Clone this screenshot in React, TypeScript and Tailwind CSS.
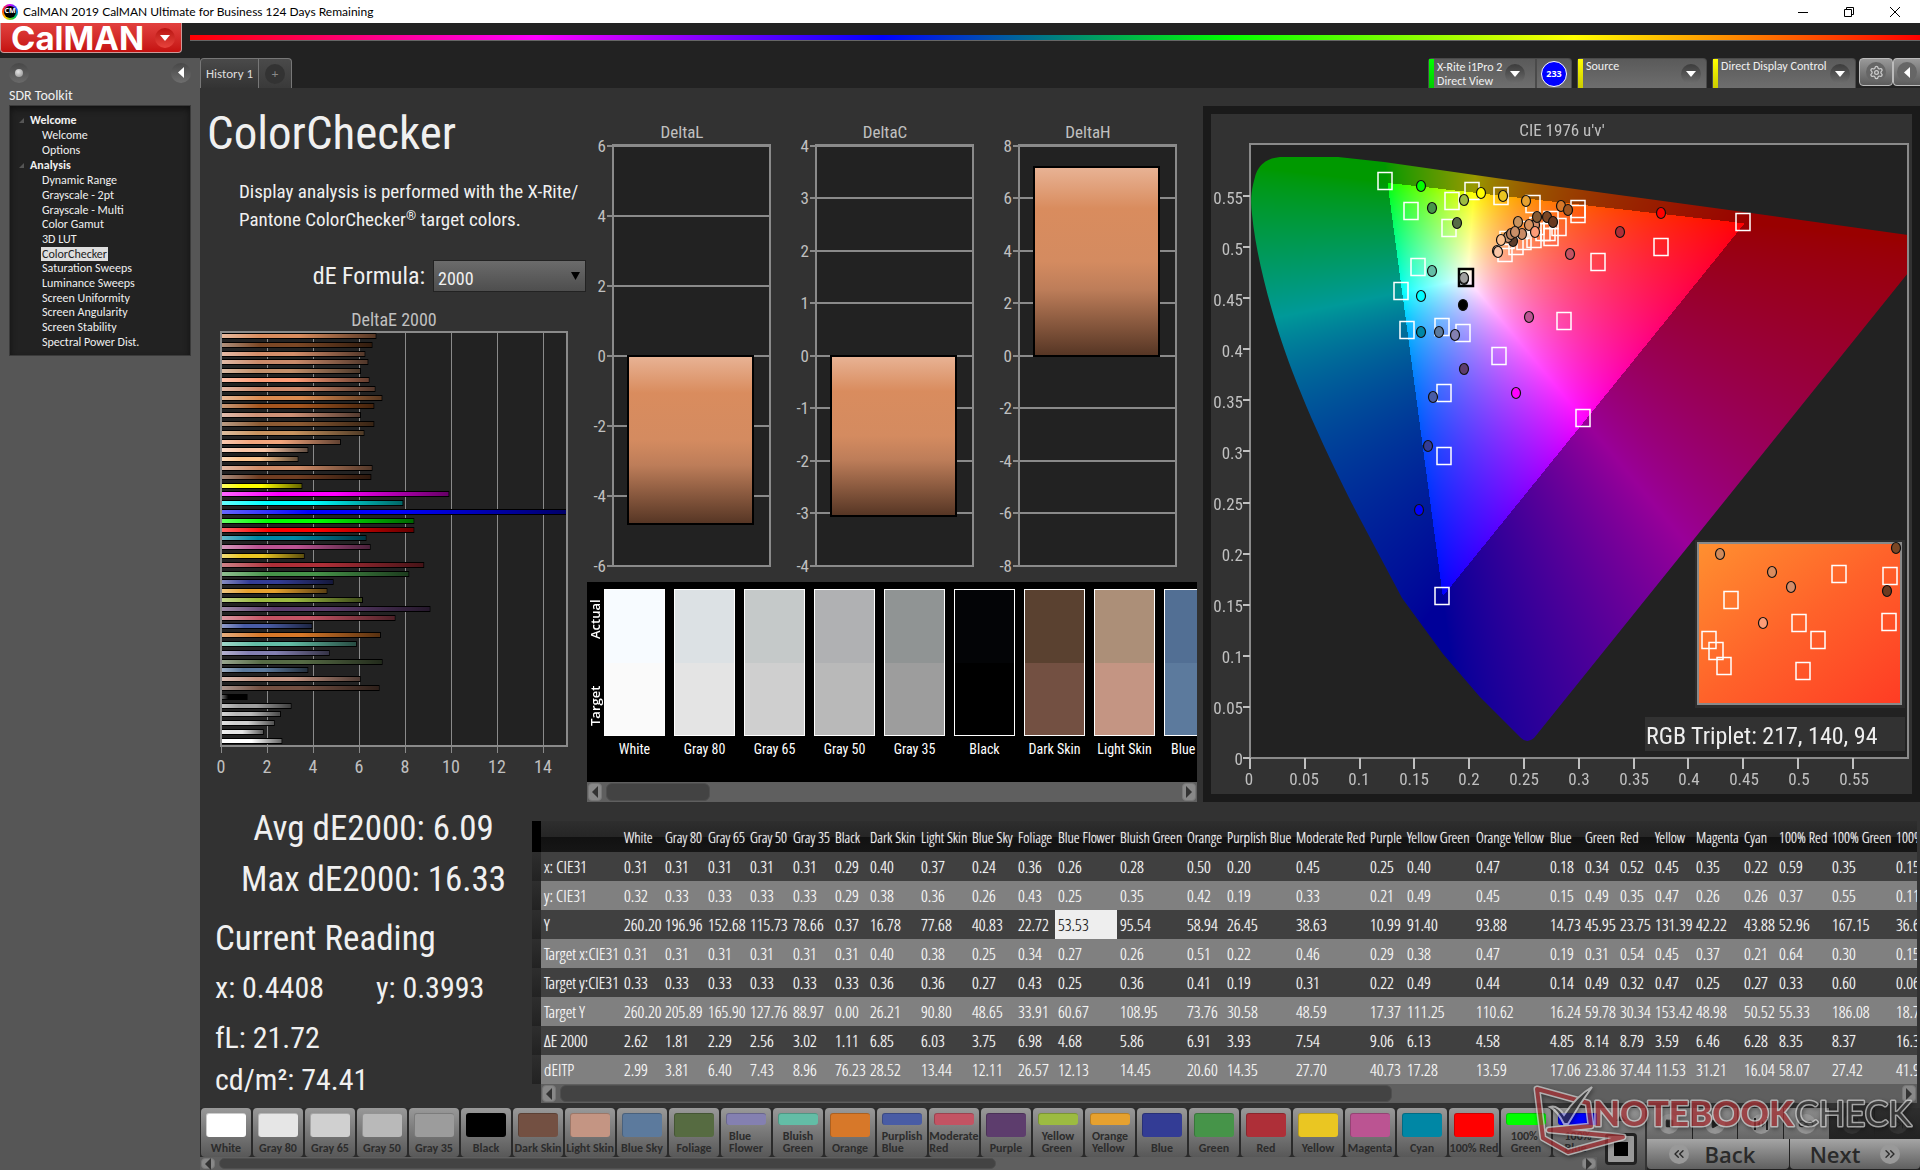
import React, { useEffect, useRef } from "react";
import clsx from "clsx";
import { Settings, ChevronsLeft, ChevronsRight, Square, Play, Infinity as Loop, RefreshCw, SkipForward } from "lucide-react";

const sweeps = [
  "Dynamic Range",
  "Grayscale - 2pt",
  "Grayscale - Multi",
  "Color Gamut",
  "3D LUT",
  "ColorChecker",
  "Saturation Sweeps",
  "Luminance Sweeps",
  "Screen Uniformity",
  "Screen Angularity",
  "Screen Stability",
  "Spectral Power Dist.",
];

// [dE2000, color], top to bottom
const deltaE: [number, string][] = [
  [6.71, "#d98c5e"], [6.54, "#7b4725"], [6.23, "#d38d6a"], [6.36, "#ca8a6a"], [6.04, "#c28f6b"],
  [6.41, "#fe9c77"], [6.67, "#cf8a6c"], [6.97, "#d9894f"], [6.62, "#a5561f"], [6.04, "#cf9277"],
  [6.62, "#8b5a33"], [6.19, "#c8935f"], [5.17, "#f3a57c"], [3.75, "#f9c5a6"], [3.32, "#fdc590"],
  [6.54, "#cf8c68"], [6.49, "#6f3d22"], [3.49, "#ffff00"], [9.88, "#ff00ff"], [7.88, "#00ffff"],
  [15.1, "#0000ff"], [8.36, "#00ff00"], [8.36, "#ff0000"], [6.28, "#0087a5"], [6.46, "#bb5492"],
  [3.59, "#eac622"], [8.79, "#ae2f38"], [8.14, "#469449"], [4.85, "#333c95"], [4.58, "#e6a12f"],
  [6.13, "#9cbb41"], [9.06, "#5d3d6d"], [7.54, "#c35363"], [3.93, "#495ca5"], [6.91, "#d77829"],
  [5.86, "#63bda6"], [4.68, "#8480b1"], [6.98, "#566b45"], [3.75, "#5c7a9d"], [6.03, "#c49583"],
  [6.85, "#735042"], [1.11, "#000000"], [3.02, "#9f9f9f"], [2.56, "#b9b9b9"], [2.29, "#d0d0d0"],
  [1.81, "#e6e6e6"], [2.62, "#ffffff"],
];

const comparison = [
  { name: "White", actual: "#f7fbff", target: "#fafafa" },
  { name: "Gray 80", actual: "#dce1e4", target: "#e4e4e4" },
  { name: "Gray 65", actual: "#c5c9c9", target: "#cfcfcf" },
  { name: "Gray 50", actual: "#b0b1b3", target: "#b9b9b9" },
  { name: "Gray 35", actual: "#909494", target: "#9d9d9d" },
  { name: "Black", actual: "#030406", target: "#000000" },
  { name: "Dark Skin", actual: "#5a4130", target: "#735042" },
  { name: "Light Skin", actual: "#ac8f78", target: "#c49583" },
  { name: "Blue Sky", actual: "#526f94", target: "#5c7a9d" },
];

// a line break in the name gives the low swatch
const patches: [string, string][] = [
  ["White", "#ffffff"], ["Gray 80", "#e6e6e6"], ["Gray 65", "#d0d0d0"], ["Gray 50", "#b9b9b9"],
  ["Gray 35", "#9c9c9c"], ["Black", "#000000"], ["Dark Skin", "#735042"], ["Light Skin", "#c49583"],
  ["Blue Sky", "#5c7a9d"], ["Foliage", "#566b41"], ["Blue\nFlower", "#8480b1"], ["Bluish\nGreen", "#63bda6"],
  ["Orange", "#d77829"], ["Purplish\nBlue", "#495ca5"], ["Moderate\nRed", "#c35363"], ["Purple", "#5d3d6d"],
  ["Yellow\nGreen", "#9cbb41"], ["Orange\nYellow", "#e6a12f"], ["Blue", "#333c95"], ["Green", "#469449"],
  ["Red", "#ae2f38"], ["Yellow", "#eac622"], ["Magenta", "#bb5492"], ["Cyan", "#0087a5"],
  ["100% Red", "#ff0000"], ["100%\nGreen", "#00ff00"], ["100%\nBlue", "#0000ff"],
];

const columns: [string, number][] = [
  ["White", 41], ["Gray 80", 43], ["Gray 65", 42], ["Gray 50", 43], ["Gray 35", 42], ["Black", 35],
  ["Dark Skin", 51], ["Light Skin", 51], ["Blue Sky", 46], ["Foliage", 40], ["Blue Flower", 62],
  ["Bluish Green", 67], ["Orange", 40], ["Purplish Blue", 69], ["Moderate Red", 74], ["Purple", 37],
  ["Yellow Green", 69], ["Orange Yellow", 74], ["Blue", 35], ["Green", 35], ["Red", 35], ["Yellow", 41],
  ["Magenta", 48], ["Cyan", 35], ["100% Red", 53], ["100% Green", 64], ["100% Blue", 64],
];

const rows: [string, string][] = [
  ["x: CIE31", "0.31 0.31 0.31 0.31 0.31 0.29 0.40 0.37 0.24 0.36 0.26 0.28 0.50 0.20 0.45 0.25 0.40 0.47 0.18 0.34 0.52 0.45 0.35 0.22 0.59 0.35 0.15"],
  ["y: CIE31", "0.32 0.33 0.33 0.33 0.33 0.29 0.38 0.36 0.26 0.43 0.25 0.35 0.42 0.19 0.33 0.21 0.49 0.45 0.15 0.49 0.35 0.47 0.26 0.26 0.37 0.55 0.11"],
  ["Y", "260.20 196.96 152.68 115.73 78.66 0.37 16.78 77.68 40.83 22.72 53.53 95.54 58.94 26.45 38.63 10.99 91.40 93.88 14.73 45.95 23.75 131.39 42.22 43.88 52.96 167.15 36.67"],
  ["Target x:CIE31", "0.31 0.31 0.31 0.31 0.31 0.31 0.40 0.38 0.25 0.34 0.27 0.26 0.51 0.22 0.46 0.29 0.38 0.47 0.19 0.31 0.54 0.45 0.37 0.21 0.64 0.30 0.15"],
  ["Target y:CIE31", "0.33 0.33 0.33 0.33 0.33 0.33 0.36 0.36 0.27 0.43 0.25 0.36 0.41 0.19 0.31 0.22 0.49 0.44 0.14 0.49 0.32 0.47 0.25 0.27 0.33 0.60 0.06"],
  ["Target Y", "260.20 205.89 165.90 127.76 88.97 0.00 26.21 90.80 48.65 33.91 60.67 108.95 73.76 30.58 48.59 17.37 111.25 110.62 16.24 59.78 30.34 153.42 48.98 50.52 55.33 186.08 18.79"],
  ["ΔE 2000", "2.62 1.81 2.29 2.56 3.02 1.11 6.85 6.03 3.75 6.98 4.68 5.86 6.91 3.93 7.54 9.06 6.13 4.58 4.85 8.14 8.79 3.59 6.46 6.28 8.35 8.37 16.33"],
  ["dEITP", "2.99 3.81 6.40 7.43 8.96 76.23 28.52 13.44 12.11 26.57 12.13 14.45 20.60 14.35 27.70 40.73 17.28 13.59 17.06 23.86 37.44 11.53 31.21 16.04 58.07 27.42 41.91"],
];

// marker centres, in px inside the CIE panel
const targets: [number, number][] = [
  [174, 67], [261, 77], [241, 87], [200, 97], [290, 82], [238, 114], [207, 153], [190, 177], [196, 216],
  [231, 213], [252, 219], [288, 242], [233, 279], [353, 207], [387, 148], [450, 133], [367, 95], [367, 100],
  [322, 90], [348, 113], [340, 106], [340, 123], [294, 139], [296, 126], [305, 132], [313, 127], [323, 125],
  [332, 118], [337, 118], [311, 116], [326, 112], [532, 108], [372, 304], [233, 342], [231, 482],
];

const readings: [number, number, string][] = [
  [210, 72, "#00ff00"], [221, 94, "#469449"], [253, 86, "#9cbb41"], [270, 79, "#ffff00"], [292, 82, "#eac622"],
  [315, 87, "#e6a12f"], [350, 92, "#d77829"], [357, 96, "#a05520"], [246, 109, "#566b45"], [221, 157, "#63bda6"],
  [210, 182, "#00ffff"], [210, 218, "#0087a5"], [228, 218, "#5c7a9d"], [244, 221, "#8480b1"], [253, 165, "#808080"],
  [253, 164, "#9f9f9f"], [252, 191, "#000000"], [318, 203, "#bb5492"], [359, 140, "#c35363"], [409, 118, "#ae2f38"],
  [253, 255, "#5d3d6d"], [222, 283, "#495ca5"], [305, 279, "#ff00ff"], [450, 99, "#ff0000"], [217, 332, "#333c95"],
  [208, 396, "#0000ff"], [302, 127, "#5b3c2a"], [297, 123, "#c28f6b"], [300, 120, "#b9805c"], [307, 108, "#c8935f"],
  [324, 111, "#d38d6a"], [318, 111, "#d9925f"], [324, 118, "#fe9c77"], [311, 120, "#ca8a64"], [304, 118, "#c98f68"],
  [326, 103, "#855a33"], [336, 103, "#7b4725"], [342, 108, "#6a3a20"], [290, 126, "#fdc08d"], [286, 137, "#d9a98d"],
  [287, 138, "#f9c5a6"],
];

const insetTargets: [number, number][] = [
  [628, 460], [679, 462], [520, 486], [498, 526], [505, 537], [513, 552], [588, 509], [607, 526], [678, 508], [592, 557],
];

const insetReadings: [number, number, string][] = [
  [509, 440, "#d08b5c"], [561, 458, "#d98c5e"], [580, 473, "#d38d6a"], [552, 509, "#fe9c77"], [685, 434, "#7b4725"], [676, 477, "#6b3a20"],
];

function DropArrow() {
  return (
    <span className="flex size-5 shrink-0 items-center justify-center rounded-full bg-linear-to-b from-[#3c3c3c] to-[#6e6e6e]">
      <svg width="10" height="6" viewBox="0 0 10 6"><path d="M0 0H10L5 6Z" fill="#fff" /></svg>
    </span>
  );
}

function Header() {
  return (
    <header>
      <div className="flex h-[23px] items-center bg-white pl-[2px] text-black">
        <span className="flex size-4 items-center justify-center rounded-full bg-[conic-gradient(#c0f,#06f,#0c4,#fc0,#f30,#c0f)]">
          <span className="flex size-3 items-center justify-center rounded-full bg-black font-['Open_Sans'] text-[7px] font-bold text-white">CM</span>
        </span>
        <h1 className="ml-[5px] flex-1 font-['Lato'] text-[12px]">CalMAN 2019 CalMAN Ultimate for Business 124 Days Remaining</h1>
        <div className="flex items-center pr-[2px]">
          <button aria-label="Minimize" className="flex w-[46px] justify-center"><svg width="10" height="10"><path d="M0 5.5H10" stroke="#000" /></svg></button>
          <button aria-label="Restore" className="flex w-[46px] justify-center"><svg width="10" height="10" fill="none" stroke="#000"><path d="M.5 2.5H7.5V9.5H.5ZM2.5 2.5V.5H9.5V7.5H7.5" /></svg></button>
          <button aria-label="Close" className="flex w-[46px] justify-center"><svg width="10" height="10"><path d="M0 0L10 10M10 0L0 10" stroke="#000" /></svg></button>
        </div>
      </div>
      <div className="flex h-[35px] bg-[#222]">
        <button className="flex h-[30px] w-[182px] items-center rounded-b border border-t-0 border-[#c99] bg-linear-to-b from-[#e2403e] to-[#c5100f] pl-[10px]">
          <span className="flex-1 text-left font-['Inter'] text-[33px] leading-7 font-bold text-white">CalMAN</span>
          <span className="mr-[6px] flex size-5 items-center justify-center rounded-full bg-linear-to-b from-[#b8120f] to-[#e8423c]">
            <svg width="10" height="6" viewBox="0 0 10 6"><path d="M0 0H10L5 6Z" fill="#fff" /></svg>
          </span>
        </button>
        <div className="mt-3 ml-2 h-[6px] flex-1 border-b border-[#666] bg-[linear-gradient(to_right,#f00,#f0f,#00f,#0f0,#ff0,#f00)]" />
      </div>
    </header>
  );
}

function TreeGroup({ name, items, className }: { name: string; items: string[]; className: string }) {
  return (
    <div>
      <div className="flex h-4 items-center text-[12px] font-bold">
        <svg width="5" height="5" className="mr-[6px]"><path d="M5 0V5H0Z" fill="#555" /></svg>
        {name}
      </div>
      <ul className={clsx("grid auto-rows-fr items-center pl-[22px] text-[12px] leading-[14px]", className)}>
        {items.map((item) => (
          <li key={item} className="flex">
            <a href="#" className={clsx("px-px", item === "ColorChecker" && "bg-[#dedede] text-[#222]")}>{item}</a>
          </li>
        ))}
      </ul>
    </div>
  );
}

function Sidebar() {
  return (
    <aside className="w-[200px] shrink-0 bg-[#565656] px-[9px] font-['Carlito'] text-[#f0f0f0]">
      <div className="flex h-[29px] items-center justify-between">
        <button aria-label="Pin" className="flex size-5 items-center justify-center rounded-full bg-linear-to-b from-[#484848] to-[#6a6a6a]">
          <span className="size-2 rounded-full bg-[radial-gradient(circle_at_40%_35%,#e4e4e4,#8a8a8a)]" />
        </button>
        <button aria-label="Collapse" className="flex size-5 items-center justify-center rounded-full bg-linear-to-b from-[#484848] to-[#6e6e6e]">
          <svg width="6" height="11"><path d="M6 0V11L0 5.5Z" fill="#fff" /></svg>
        </button>
      </div>
      <h2 className="h-[18px] text-[14px] leading-[18px]">SDR Toolkit</h2>
      <nav className="h-[251px] border border-[#3a3a3a] bg-[#222] pt-[6px] pl-[9px] shadow-[inset_0_3px_6px_#111]">
        <TreeGroup name="Welcome" items={["Welcome", "Options"]} className="h-[29px]" />
        <TreeGroup name="Analysis" items={sweeps} className="h-[176px]" />
      </nav>
    </aside>
  );
}

function Devices() {
  return (
    <div className="flex font-['Carlito'] text-[12px] leading-[14px] text-[#f0f0f0]">
      <div className="mr-[5px] flex h-[30px] w-[144px] rounded-t border border-b-0 border-[#4a4a4a] bg-linear-to-b from-[#5a5a5a] to-[#6e6e6e]">
        <span className="w-[5px] bg-linear-to-b from-[#0f0] to-[#0c0]" />
        <button className="flex flex-1 items-center pr-[10px] pl-[3px] text-left"><span className="flex-1">X-Rite i1Pro 2<br />Direct View</span><DropArrow /></button>
        <span className="flex w-9 items-center justify-center border-l-2 border-[#4a4a4a]">
          <span className="flex size-[26px] items-center justify-center rounded-full border border-white bg-[#00f] font-['Open_Sans'] text-[9px] font-bold text-white">233</span>
        </span>
      </div>
      <button className="mr-[5px] flex h-[30px] w-[130px] rounded-t border border-b-0 border-[#4a4a4a] bg-linear-to-b from-[#5a5a5a] to-[#6e6e6e] pr-[5px] text-left">
        <span className="mr-[3px] h-full w-[5px] bg-linear-to-b from-[#ff0] to-[#cc0]" />
        <span className="flex-1">Source</span>
        <span className="self-center"><DropArrow /></span>
      </button>
      <button className="mr-[3px] flex h-[30px] w-[144px] rounded-t border border-b-0 border-[#4a4a4a] bg-linear-to-b from-[#5a5a5a] to-[#6e6e6e] pr-[5px] text-left">
        <span className="mr-[3px] h-full w-[5px] bg-linear-to-b from-[#ff0] to-[#cc0]" />
        <span className="flex-1 whitespace-nowrap">Direct Display Control</span>
        <span className="self-center"><DropArrow /></span>
      </button>
      <button aria-label="Settings" className="flex h-7 w-[34px] items-center justify-center rounded border border-[#bbb] bg-linear-to-b from-[#999] to-[#5c5c5c]">
        <span className="flex size-5 items-center justify-center rounded-full bg-[#666]"><Settings size={15} color="#ccc" /></span>
      </button>
      <button aria-label="Show panel" className="flex h-7 w-[27px] items-center justify-center rounded-l border border-r-0 border-[#bbb] bg-linear-to-b from-[#999] to-[#5c5c5c]">
        <span className="flex size-5 items-center justify-center rounded-full bg-[#666]"><svg width="6" height="11"><path d="M6 0V11L0 5.5Z" fill="#fff" /></svg></span>
      </button>
    </div>
  );
}

function DeltaEChart() {
  return (
    <svg width="387" height="490" className="mt-2 block text-[18px]" fill="#c0c0c0">
      <defs>
        <linearGradient id="shineX">
          <stop offset="0" stopColor="#fff" stopOpacity=".4" />
          <stop offset=".25" stopColor="#fff" stopOpacity="0" />
          <stop offset=".5" stopColor="#000" stopOpacity="0" />
          <stop offset="1" stopColor="#000" stopOpacity=".6" />
        </linearGradient>
        <clipPath id="plotE"><rect x="21" y="32" width="346" height="414" /></clipPath>
      </defs>
      <text x="194" y="26" textAnchor="middle">DeltaE 2000</text>
      <rect x="21" y="32" width="346" height="414" fill="#222" />
      {[0, 2, 4, 6, 8, 10, 12, 14].map((v) => (
        <g key={v}>
          <path d={`M${21.5 + v * 23} 32V453`} stroke="#8a8a8a" />
          <text x={21 + v * 23} y="473" textAnchor="middle">{v}</text>
        </g>
      ))}
      <g clipPath="url(#plotE)">
        {deltaE.map(([v, color], i) => {
          const y = Math.round(33 + i * 8.8);
          return (
            <g key={i}>
              <rect x="21" y={y} width={v * 23 + 1} height="6" fill="#000" />
              <rect x="22" y={y + 1} width={v * 23 - 1} height="4" fill={color} />
              <rect x="22" y={y + 1} width={v * 23 - 1} height="4" fill="url(#shineX)" />
            </g>
          );
        })}
      </g>
      <rect x="21" y="32" width="346" height="414" fill="none" stroke="#8a8a8a" strokeWidth="2" />
    </svg>
  );
}

function DeltaChart({ title, max, step, value }: { title: string; max: number; step: number; value: number }) {
  const y = (v: number) => Math.round(267.5 - (v / max) * 210);
  const ticks: number[] = [];
  for (let v = max; v >= -max; v -= step) ticks.push(v);
  const top = Math.min(y(value), y(0));
  const height = Math.abs(y(value) - y(0));
  return (
    <svg width="203" height="494" className="block text-[17px]" fill="#c0c0c0">
      <defs>
        <linearGradient id={"bar" + title} x2="0" y2="1">
          <stop offset="0" stopColor="#e8b395" />
          <stop offset=".22" stopColor="#d98c5e" />
          <stop offset=".5" stopColor="#d48b60" />
          <stop offset=".65" stopColor="#bd7d59" />
          <stop offset="1" stopColor="#553524" />
        </linearGradient>
      </defs>
      <text x="95" y="50" textAnchor="middle">{title}</text>
      <rect x="26" y="57" width="157" height="421" fill="#222" stroke="#8a8a8a" strokeWidth="2" />
      {ticks.map((v) => (
        <g key={v}>
          <path d={`M20 ${y(v)}H183`} stroke="#8a8a8a" strokeWidth="2" />
          <text x="19" y={y(v) + 6} textAnchor="end">{v}</text>
        </g>
      ))}
      <rect x="41" y={top} width="125" height={height} fill={`url(#bar${title})`} stroke="#000" strokeWidth="2" />
    </svg>
  );
}

function ScrollBar({ thumb, className }: { thumb: string; className: string }) {
  return (
    <div className={clsx("flex bg-[#5f5f5f] p-px", className)}>
      <button aria-label="Scroll left" className="flex w-[14px] items-center justify-center rounded-sm border border-[#777] bg-[#888]"><svg width="6" height="12"><path d="M6 0V12L0 6Z" fill="#333" /></svg></button>
      <div className="mx-1 flex flex-1"><div className={clsx("rounded-md border border-[#4f4f4f] bg-[#434343]", thumb)} /></div>
      <button aria-label="Scroll right" className="flex w-[14px] items-center justify-center rounded-sm border border-[#777] bg-[#888]"><svg width="6" height="12"><path d="M0 0V12L6 6Z" fill="#333" /></svg></button>
    </div>
  );
}

function Comparison() {
  return (
    <section className="w-[610px]">
      <div className="flex h-[200px] overflow-hidden bg-black pt-[7px] text-white">
        <div className="flex h-[147px] w-[17px] shrink-0 rotate-180 justify-between pt-[10px] pb-[10px] font-['Open_Sans'] text-[13px] leading-4 font-semibold [writing-mode:vertical-rl]">
          <span>Target</span>
          <span>Actual</span>
        </div>
        {comparison.map((c) => (
          <figure key={c.name} className="mr-[9px] w-[61px] shrink-0 text-center">
            <div className="h-[147px] border border-white">
              <div className="h-1/2" style={{ backgroundColor: c.actual }} />
              <div className="h-1/2" style={{ backgroundColor: c.target }} />
            </div>
            <figcaption className="text-[14px] leading-[26px] whitespace-nowrap">{c.name}</figcaption>
          </figure>
        ))}
      </div>
      <ScrollBar className="h-5" thumb="w-[104px]" />
    </section>
  );
}

// u'v' chart colours: full strength inside sRGB, dimmed outside, cut to the spectral locus
function drawGamut(canvas: HTMLCanvasElement) {
  const ctx = canvas.getContext("2d");
  if (!ctx) return;
  const { width, height } = canvas;
  const img = ctx.createImageData(width, height);
  for (let py = 0; py < height; py++) {
    for (let px = 0; px < width; px++) {
      const u = px / 1096;
      const v = Math.max(0.6 - py / 1022, 0.001);
      const X = (9 * u) / (4 * v);
      const Z = (12 - 3 * u - 20 * v) / (4 * v);
      const rgb = [
        3.2406 * X - 1.5372 - 0.4986 * Z,
        -0.9689 * X + 1.8758 + 0.0415 * Z,
        0.0557 * X - 0.204 + 1.057 * Z,
      ];
      const dim = rgb.some((c) => c < 0) ? 0.6 : 1;
      const max = Math.max(...rgb);
      const i = (py * width + px) * 4;
      rgb.forEach((c, k) => {
        img.data[i + k] = 255 * dim * Math.pow(Math.max(c, 0) / max, 1 / 1.3);
      });
      img.data[i + 3] = 255;
    }
  }
  ctx.putImageData(img, 0, 0);
  ctx.globalCompositeOperation = "destination-in";
  ctx.fill(new Path2D(
    "M88 13 L33 13 C16 13 8 22 5 33 C2 44 0 52 2 70 C5 102 14 140 26 180 C40 226 66 290 109 373 L152 454 L193 510 L230 553 L271 594 Q277 600 284 594 L658 129 V91 L501 69 L281 39 L134 18 Z"
  ));
  ctx.globalCompositeOperation = "source-over";
}

function Marker({ x, y }: { x: number; y: number }) {
  return <rect x={x - 7} y={y - 8.5} width="14" height="17" fill="none" stroke="#fff" strokeWidth="1.5" />;
}

function Reading({ x, y, color }: { x: number; y: number; color: string }) {
  return <ellipse cx={x} cy={y} rx="4.5" ry="5.5" fill={color} stroke="#111" strokeWidth="1.2" />;
}

function CieChart() {
  const ref = useRef<HTMLCanvasElement>(null);

  useEffect(() => {
    if (ref.current) drawGamut(ref.current);
  }, []);

  const ticks = Array.from({ length: 12 }, (_, i) => i);
  return (
    <section className="mt-[18px] flex-1 bg-[#1a1a1a] p-2">
      <div className="grid h-[680px] overflow-hidden bg-[#323232]">
        <canvas ref={ref} width={658} height={614} className="col-start-1 row-start-1 mt-[30px] ml-[39px] bg-[#222]" />
        <svg width="701" height="680" className="col-start-1 row-start-1 text-[17px]" fill="#c0c0c0">
          <defs>
            <linearGradient id="inset" x2="1" y2="1">
              <stop offset="0" stopColor="#ff9030" />
              <stop offset=".5" stopColor="#ff622a" />
              <stop offset="1" stopColor="#ff3c24" />
            </linearGradient>
          </defs>
          <text x="351" y="22" textAnchor="middle">CIE 1976 u'v'</text>
          <rect x="39" y="30" width="658" height="614" fill="none" stroke="#8a8a8a" strokeWidth="2" />
          {ticks.map((i) => (
            <g key={i} stroke="none">
              <path d={`M32 ${Math.round(644 - i * 51.1)}H39M${Math.round(39 + i * 54.8)} 644V655`} stroke="#c0c0c0" strokeWidth="2" />
              <text x="32" y={651 - i * 51} textAnchor="end">{i / 20}</text>
              <text x={38 + i * 55} y="671" textAnchor="middle">{i / 20}</text>
            </g>
          ))}
          {targets.map(([x, y], i) => <Marker key={i} x={x} y={y} />)}
          <rect x="248" y="155" width="14" height="17" fill="none" stroke="#000" strokeWidth="2.5" />
          {readings.map(([x, y, color], i) => <Reading key={i} x={x} y={y} color={color} />)}
          <rect x="484" y="426" width="210" height="168" fill="#2d2d2d" />
          <rect x="487" y="429" width="203" height="161" fill="url(#inset)" stroke="#8a8a8a" strokeWidth="2" />
          {insetTargets.map(([x, y], i) => <Marker key={i} x={x} y={y} />)}
          {insetReadings.map(([x, y, color], i) => <Reading key={i} x={x} y={y} color={color} />)}
          <rect x="434" y="603" width="260" height="34" fill="#323232" />
          <text x="435" y="630" fill="#eee" className="text-[24px]">RGB Triplet: 217, 140, 94</text>
        </svg>
      </div>
    </section>
  );
}

function Stats() {
  return (
    <section className="w-[332px] shrink-0 pt-px pl-[15px] text-[#f0f0f0]">
      <div className="text-center text-[35px] leading-[51px]">
        <p>Avg dE2000: 6.09</p>
        <p>Max dE2000: 16.33</p>
      </div>
      <h3 className="mt-[6px] text-[35px] leading-[56px]">Current Reading</h3>
      <div className="text-[30px] leading-[42px]">
        <p className="flex"><span className="w-[161px]">x: 0.4408</span><span>y: 0.3993</span></p>
        <p className="mt-2">fL: 21.72</p>
        <p>cd/m²: 74.41</p>
      </div>
    </section>
  );
}

function Readings() {
  return (
    <section className="mt-[19px] mr-[3px] min-w-0 flex-1">
      <div className="flex overflow-hidden">
        <div className="w-[9px] shrink-0 border-t-[31px] border-black bg-[repeating-linear-gradient(#2e2e2e_0,#222_29px)]" />
        <table className="w-[1416px] shrink-0 table-fixed border-collapse text-left font-['Open_Sans_Condensed_Light','Open_Sans_Condensed','Roboto_Condensed',sans-serif] text-[17px] leading-5 font-light whitespace-nowrap text-white [text-shadow:0_0_1px_#bbb]">
          <colgroup>
            <col className="w-[80px]" />
            {columns.map(([name, w]) => <col key={name} style={{ width: w }} />)}
          </colgroup>
          <thead>
            <tr className="h-[31px] bg-[linear-gradient(#2e2e2e,#262626_50%,#111_52%,#161616)] text-[15px]">
              <th />
              {columns.map(([name]) => <th key={name} scope="col" className="p-0 pl-[3px] font-light">{name}</th>)}
            </tr>
          </thead>
          <tbody>
            {rows.map(([label, values]) => (
              <tr key={label} className="h-[29px] odd:bg-[#404040] even:bg-[#808080]">
                <th scope="row" className="p-0 pl-[3px] font-light">{label}</th>
                {values.split(" ").map((v, i) => (
                  <td key={i} className={clsx("p-0 pl-[3px]", v === "53.53" && "bg-[#eee] text-black")}>{v}</td>
                ))}
              </tr>
            ))}
          </tbody>
        </table>
      </div>
      <ScrollBar className="ml-[9px] h-[19px]" thumb="w-[832px]" />
    </section>
  );
}

function Patches() {
  return (
    <div className="min-w-0 flex-1">
      <div className="flex h-[49px] gap-[2px] overflow-hidden bg-[#2a2a2a] pl-px">
        {patches.map(([name, color]) => (
          <button key={name} className="flex w-[50px] shrink-0 flex-col items-center rounded bg-linear-to-b from-[#999] to-[#585858] pt-[5px] font-['Carlito'] text-[12px] leading-3 font-bold text-[#2c2c2c]">
            <span className={clsx("w-10 shrink-0 rounded-[3px] border-t border-l border-black/20", name.includes("\n") ? "h-3" : "h-6")} style={{ backgroundColor: color }} />
            <span className="flex flex-1 items-center pt-[2px] text-left whitespace-pre">{name}</span>
          </button>
        ))}
      </div>
      <ScrollBar className="h-[13px]" thumb="w-[777px]" />
    </div>
  );
}

function Transport() {
  const icons = [
    <Square size={9} fill="#222" />,
    <Play size={10} fill="#222" />,
    <svg width="14" height="12" fill="#222"><path d="M0 0H2V12H0ZM12 0H14V12H12ZM3 6L6 3V9ZM11 6L8 3V9Z" /></svg>,
    <Loop size={16} />,
    <RefreshCw size={13} />,
    <SkipForward size={12} />,
  ];
  const names = ["Stop", "Play", "Step", "Continuous", "Refresh", "Skip"];
  return (
    <div className="flex bg-[#222]">
      <div className="flex w-[50px] flex-col border-r-2 border-[#333]">
        <button aria-label="Up" className="flex h-[19px] items-center justify-center bg-linear-to-b from-[#999] to-[#777]"><svg width="10" height="6"><path d="M0 6H10L5 0Z" fill="#333" /></svg></button>
        <div className="flex flex-1 items-center justify-center bg-linear-to-b from-[#777] to-[#4c4c4c]">
          <button aria-label="Pattern window" className="flex size-8 items-center justify-center rounded border-[3px] border-[#222] bg-[#999]"><span className="size-[14px] bg-black" /></button>
        </div>
      </div>
      <div className="w-[273px]">
        <div className="flex h-[31px] gap-px">
          {icons.map((icon, i) => (
            <button key={names[i]} aria-label={names[i]} className={clsx("flex flex-1 items-center justify-center bg-linear-to-b text-[#222]", i < 4 ? "from-[#8c8c8c] to-[#666]" : "from-[#2e2e2e] to-[#222]")}>
              <span className={clsx("flex size-5 items-center justify-center rounded-full", i < 4 ? "bg-[#959595]" : "bg-[#333]")}>{icon}</span>
            </button>
          ))}
        </div>
        <div className="flex h-[31px] gap-px pb-px font-['Open_Sans'] text-[22px] text-[#2a2a2a]">
          <button className="flex flex-1 items-center justify-center gap-4 rounded-b bg-linear-to-b from-[#a5a5a5] to-[#606060] pr-3 font-semibold">
            <span className="flex size-5 items-center justify-center rounded-full bg-[#999]"><ChevronsLeft size={16} /></span>Back
          </button>
          <button className="flex flex-1 items-center justify-center gap-5 rounded-b bg-linear-to-b from-[#a5a5a5] to-[#606060] font-semibold">
            Next<span className="flex size-5 items-center justify-center rounded-full bg-[#999]"><ChevronsRight size={16} /></span>
          </button>
        </div>
      </div>
    </div>
  );
}

function Watermark() {
  return (
    <svg width="382" height="76" className="pointer-events-none absolute right-2 bottom-[10px] overflow-visible opacity-75 drop-shadow-[1px_2px_2px_rgba(0,0,0,0.5)]">
      <g fill="none" strokeLinejoin="round">
        <path d="M7 5L58 19L61 42L19 46L93 53L38 68L13 54Z" stroke="#ccc" strokeWidth="7" />
        <path d="M7 5L58 19L61 42L19 46L93 53L38 68L13 54Z" stroke="#a33034" strokeWidth="4" />
      </g>
      <path d="M20 23C26 21 30 25 34 31C42 19 50 10 62 3C54 14 46 26 38 40H34C30 32 26 26 20 23Z" fill="#333" stroke="#ccc" strokeWidth="2" />
      <g fontFamily="Lato" fontSize="35" stroke="#ccc" strokeWidth="3" strokeLinejoin="round" paintOrder="stroke">
        <text x="63" y="42" fontWeight="900" fill="#a33034">NOTEBOOK</text>
        <text x="265" y="42" fill="#3a3a3a">CHECK</text>
      </g>
    </svg>
  );
}

export default function App() {
  return (
    <div className="relative flex min-h-screen flex-col overflow-hidden bg-[#222] font-['Roboto_Condensed','Roboto',sans-serif]">
      <Header />
      <div className="flex flex-1">
        <Sidebar />
        <main className="flex min-w-0 flex-1 flex-col bg-[#323232]">
          <div className="flex h-[30px] items-start justify-between bg-[#222]">
            <div className="flex font-['Carlito'] text-[13px] text-[#ddd]">
              <button className="h-[30px] w-[59px] rounded-tl border border-b-0 border-[#777] bg-linear-to-b from-[#4a4a4a] to-[#333]">History 1</button>
              <button aria-label="Add history" className="flex h-[30px] w-[33px] items-center justify-center rounded-tr border border-b-0 border-l-0 border-[#777] bg-linear-to-b from-[#4a4a4a] to-[#3a3a3a]">
                <span className="flex size-5 items-center justify-center rounded-full bg-[#333] text-[#888]">+</span>
              </button>
            </div>
            <Devices />
          </div>

          <div className="flex">
            <section className="w-[387px] shrink-0">
              <h2 className="mt-[17px] pl-[7px] text-[47px] leading-[56px] text-[#f0f0f0]">ColorChecker</h2>
              <p className="mt-[17px] pl-[39px] text-[19px] leading-7 whitespace-nowrap text-[#f0f0f0]">
                Display analysis is performed with the X-Rite/<br />Pantone ColorChecker<span className="align-top text-[13px] leading-5">®</span> target colors.
              </p>
              <div className="mt-[26px] flex h-8 items-center justify-end gap-2 pr-px text-[#f0f0f0]">
                <label htmlFor="formula" className="text-[24px]">dE Formula:</label>
                <div className="grid w-[153px] items-center">
                  <select id="formula" className="col-start-1 row-start-1 h-8 appearance-none border border-[#222] bg-linear-to-b from-[#6b6b6b] to-[#4e4e4e] pt-1 pl-1 text-[18px]">
                    <option>2000</option>
                  </select>
                  <svg width="9" height="8" className="pointer-events-none col-start-1 row-start-1 mr-[6px] justify-self-end"><path d="M0 0H9L4.500 8Z" /></svg>
                </div>
              </div>
              <DeltaEChart />
            </section>
            <section className="w-[616px] shrink-0">
              <div className="flex">
                <DeltaChart title="DeltaL" max={6} step={2} value={-4.8} />
                <DeltaChart title="DeltaC" max={4} step={1} value={-3.05} />
                <DeltaChart title="DeltaH" max={8} step={2} value={7.2} />
              </div>
              <Comparison />
            </section>
            <CieChart />
          </div>

          <div className="flex h-[306px]">
            <Stats />
            <Readings />
          </div>

          <div className="flex">
            <Patches />
            <Transport />
          </div>
        </main>
      </div>
      <Watermark />
    </div>
  );
}
